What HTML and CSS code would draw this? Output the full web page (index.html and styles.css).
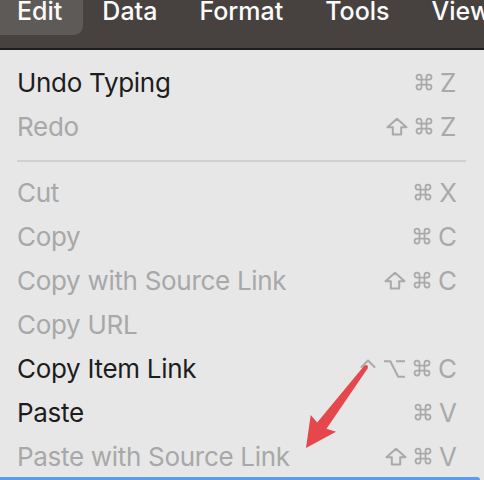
FILE: index.html
```html
<!DOCTYPE html>
<html>
<head>
<meta charset="utf-8">
<link rel="stylesheet" href="styles.css">
</head>
<body>
<div class="screen">
  <nav class="menubar">
    <span class="mb-item active">Edit</span>
    <span class="mb-item">Data</span>
    <span class="mb-item">Format</span>
    <span class="mb-item">Tools</span>
    <span class="mb-item">View</span>
  </nav>
  <div class="menu">
    <div class="row"><span class="label">Undo Typing</span><span class="keys"><svg class="k-cmd" viewBox="0 0 24 24"><path d="M15 6v12a3 3 0 1 0 3-3H6a3 3 0 1 0 3 3V6a3 3 0 1 0-3 3h12a3 3 0 1 0-3-3"/></svg><span class="key">Z</span></span></div>
    <div class="row disabled"><span class="label">Redo</span><span class="keys"><svg class="k-shift" viewBox="0 0 22 19"><polygon points="11,1.8 20.5,10.2 15.2,10.2 15.2,17.4 6.8,17.4 6.8,10.2 1.5,10.2"/></svg><svg class="k-cmd" viewBox="0 0 24 24"><path d="M15 6v12a3 3 0 1 0 3-3H6a3 3 0 1 0 3 3V6a3 3 0 1 0-3 3h12a3 3 0 1 0-3-3"/></svg><span class="key">Z</span></span></div>
    <div class="separator"></div>
    <div class="row disabled"><span class="label">Cut</span><span class="keys"><svg class="k-cmd" viewBox="0 0 24 24"><path d="M15 6v12a3 3 0 1 0 3-3H6a3 3 0 1 0 3 3V6a3 3 0 1 0-3 3h12a3 3 0 1 0-3-3"/></svg><span class="key">X</span></span></div>
    <div class="row disabled"><span class="label">Copy</span><span class="keys"><svg class="k-cmd" viewBox="0 0 24 24"><path d="M15 6v12a3 3 0 1 0 3-3H6a3 3 0 1 0 3 3V6a3 3 0 1 0-3 3h12a3 3 0 1 0-3-3"/></svg><span class="key">C</span></span></div>
    <div class="row disabled"><span class="label">Copy with Source Link</span><span class="keys"><svg class="k-shift" viewBox="0 0 22 19"><polygon points="11,1.8 20.5,10.2 15.2,10.2 15.2,17.4 6.8,17.4 6.8,10.2 1.5,10.2"/></svg><svg class="k-cmd" viewBox="0 0 24 24"><path d="M15 6v12a3 3 0 1 0 3-3H6a3 3 0 1 0 3 3V6a3 3 0 1 0-3 3h12a3 3 0 1 0-3-3"/></svg><span class="key">C</span></span></div>
    <div class="row disabled"><span class="label">Copy URL</span><span class="keys"></span></div>
    <div class="row"><span class="label">Copy Item Link</span><span class="keys"><svg class="k-ctrl" viewBox="0 0 16 20"><path d="M1.5 9 L8 2.5 L14.5 9"/></svg><svg class="k-opt" viewBox="0 0 21 18"><path d="M0.5 1.2 H6.3 L14.2 16.8 H20.5 M12.8 1.2 H20.5"/></svg><svg class="k-cmd" viewBox="0 0 24 24"><path d="M15 6v12a3 3 0 1 0 3-3H6a3 3 0 1 0 3 3V6a3 3 0 1 0-3 3h12a3 3 0 1 0-3-3"/></svg><span class="key">C</span></span></div>
    <div class="row"><span class="label">Paste</span><span class="keys"><svg class="k-cmd" viewBox="0 0 24 24"><path d="M15 6v12a3 3 0 1 0 3-3H6a3 3 0 1 0 3 3V6a3 3 0 1 0-3 3h12a3 3 0 1 0-3-3"/></svg><span class="key">V</span></span></div>
    <div class="row disabled"><span class="label">Paste with Source Link</span><span class="keys"><svg class="k-shift" viewBox="0 0 22 19"><polygon points="11,1.8 20.5,10.2 15.2,10.2 15.2,17.4 6.8,17.4 6.8,10.2 1.5,10.2"/></svg><svg class="k-cmd" viewBox="0 0 24 24"><path d="M15 6v12a3 3 0 1 0 3-3H6a3 3 0 1 0 3 3V6a3 3 0 1 0-3 3h12a3 3 0 1 0-3-3"/></svg><span class="key">V</span></span></div>
  </div>
  <div class="focusbar"></div>
  <svg class="arrow" viewBox="0 0 484 480" width="484" height="480">
    <polygon points="367.6,368.4 326.5,428.8 336,431.7 306,448 310.7,415 317.2,422.6 364.4,365.6" />
    <circle cx="366" cy="367" r="2"/>
  </svg>
</div>
</body>
</html>
```
FILE: styles.css
```css
html, body {
  margin: 0;
  padding: 0;
}
body {
  width: 484px;
  height: 480px;
  overflow: hidden;
  background: #e7e7e7;
  font-family: Inter, "Noto Sans", sans-serif;
}
.screen {
  position: relative;
  width: 484px;
  height: 480px;
  overflow: hidden;
  background: #e7e7e7;
}
.menubar {
  height: 48px;
  background: #47423f;
  border-bottom: 2px solid #1f1d1c;
  display: flex;
  align-items: flex-start;
  color: #fbfbfb;
  font-size: 25px;
  font-weight: 500;
}
.mb-item {
  height: 35px;
  line-height: 23px;
  padding: 0 21px;
  box-sizing: border-box;
}
.mb-item.active {
  width: 93px;
  padding-left: 17px;
  margin-right: -2px;
  background: #5e5a57;
  border-bottom-right-radius: 9px;
}
.menu {
  padding: 12px 27px 0 17px;
  color: #1d1d1d;
  font-size: 26px;
  letter-spacing: -0.3px;
}
.row {
  height: 44px;
  box-sizing: border-box;
  padding-bottom: 3px;
  line-height: 41px;
  display: flex;
  align-items: baseline;
  justify-content: space-between;
}
.row.disabled .label {
  color: #a8a8a8;
}
.keys {
  display: flex;
  align-items: baseline;
  gap: 6px;
  color: #a9a9a9;
  letter-spacing: 0;
}
.keys svg {
  fill: none;
  stroke: #a9a9a9;
  stroke-linejoin: round;
  stroke-linecap: round;
}
.k-cmd {
  width: 20px;
  height: 20px;
  stroke-width: 2.1;
  margin-bottom: -1px;
}
.k-shift {
  width: 22px;
  height: 19px;
  stroke-width: 2;
}
.k-opt {
  width: 21px;
  height: 18px;
  stroke-width: 2;
  margin-right: 1px;
}
.k-ctrl {
  width: 16px;
  height: 20px;
  stroke-width: 2;
  margin-bottom: 2px;
  margin-right: 2px;
}
.key {
  display: inline-block;
  min-width: 17px;
}
.separator {
  height: 22px;
  display: flex;
  align-items: center;
  margin-right: -9px;
}
.separator::before {
  content: "";
  display: block;
  width: 100%;
  height: 2px;
  background: #d0d0d0;
}
.focusbar {
  position: absolute;
  left: 0;
  right: 4px;
  bottom: 0;
  height: 3px;
  background: #5b9bf1;
  border-top-right-radius: 3px;
}
.arrow {
  position: absolute;
  left: 0;
  top: 0;
  fill: #e5474c;
}
```
